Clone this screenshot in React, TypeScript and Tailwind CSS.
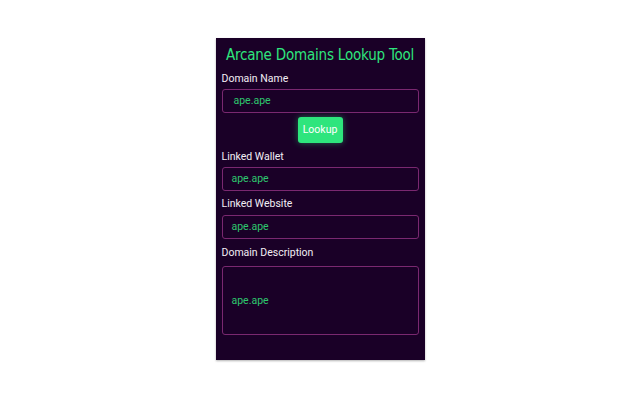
export default function App() {
  return (
    <div className="w-[640px] h-[400px] bg-white pt-[38px] overflow-hidden" style={{ fontFamily: "Roboto, 'Noto Sans', sans-serif" }}>
      <div className="mx-auto w-[209px] h-[322px] bg-[#1a0027] px-[6px] pt-[5px] shadow-[0_1px_2px_rgba(0,0,0,0.3)]">
        <h1
          className="h-[24px] whitespace-nowrap text-center text-[15px] leading-[24px] tracking-[-0.2px] text-[#2ee57d]"
          style={{ fontFamily: "'DejaVu Sans Condensed', sans-serif" }}
        >
          Arcane Domains Lookup Tool
        </h1>
        <Label text="Domain Name" mt="mt-[5px]" />
        <Field value="ape.ape" mt="mt-[3px]" pad="pl-[11px]" />
        <div className="flex justify-center mt-[4px]">
          <button className="w-[45px] h-[26px] rounded-[3px] bg-[#2ee57d] text-white text-[10.5px] shadow-[0_0_6px_rgba(46,229,125,0.45)]">
            Lookup
          </button>
        </div>
        <Label text="Linked Wallet" mt="mt-[7px]" />
        <Field value="ape.ape" mt="mt-[3px]" />
        <Label text="Linked Website" mt="mt-[6px]" />
        <Field value="ape.ape" mt="mt-[4px]" />
        <Label text="Domain Description" mt="mt-[7px]" />
        <div className="mt-[6px] h-[69px] rounded-[3px] border border-[#7a2870] flex items-center pl-[9px] text-[10.5px] text-[#2ec76e]">
          ape.ape
        </div>
      </div>
    </div>
  );
}

function Label({ text, mt }: { text: string; mt: string }) {
  return <div className={`${mt} h-[14px] leading-[14px] text-[10.5px] text-[#f2eef4]`}>{text}</div>;
}

function Field({ value, mt, pad = "pl-[9px]" }: { value: string; mt: string; pad?: string }) {
  return (
    <div className={`${mt} h-[24px] rounded-[3px] border border-[#7a2870] flex items-center ${pad} text-[10.5px] text-[#2ec76e]`}>
      {value}
    </div>
  );
}
